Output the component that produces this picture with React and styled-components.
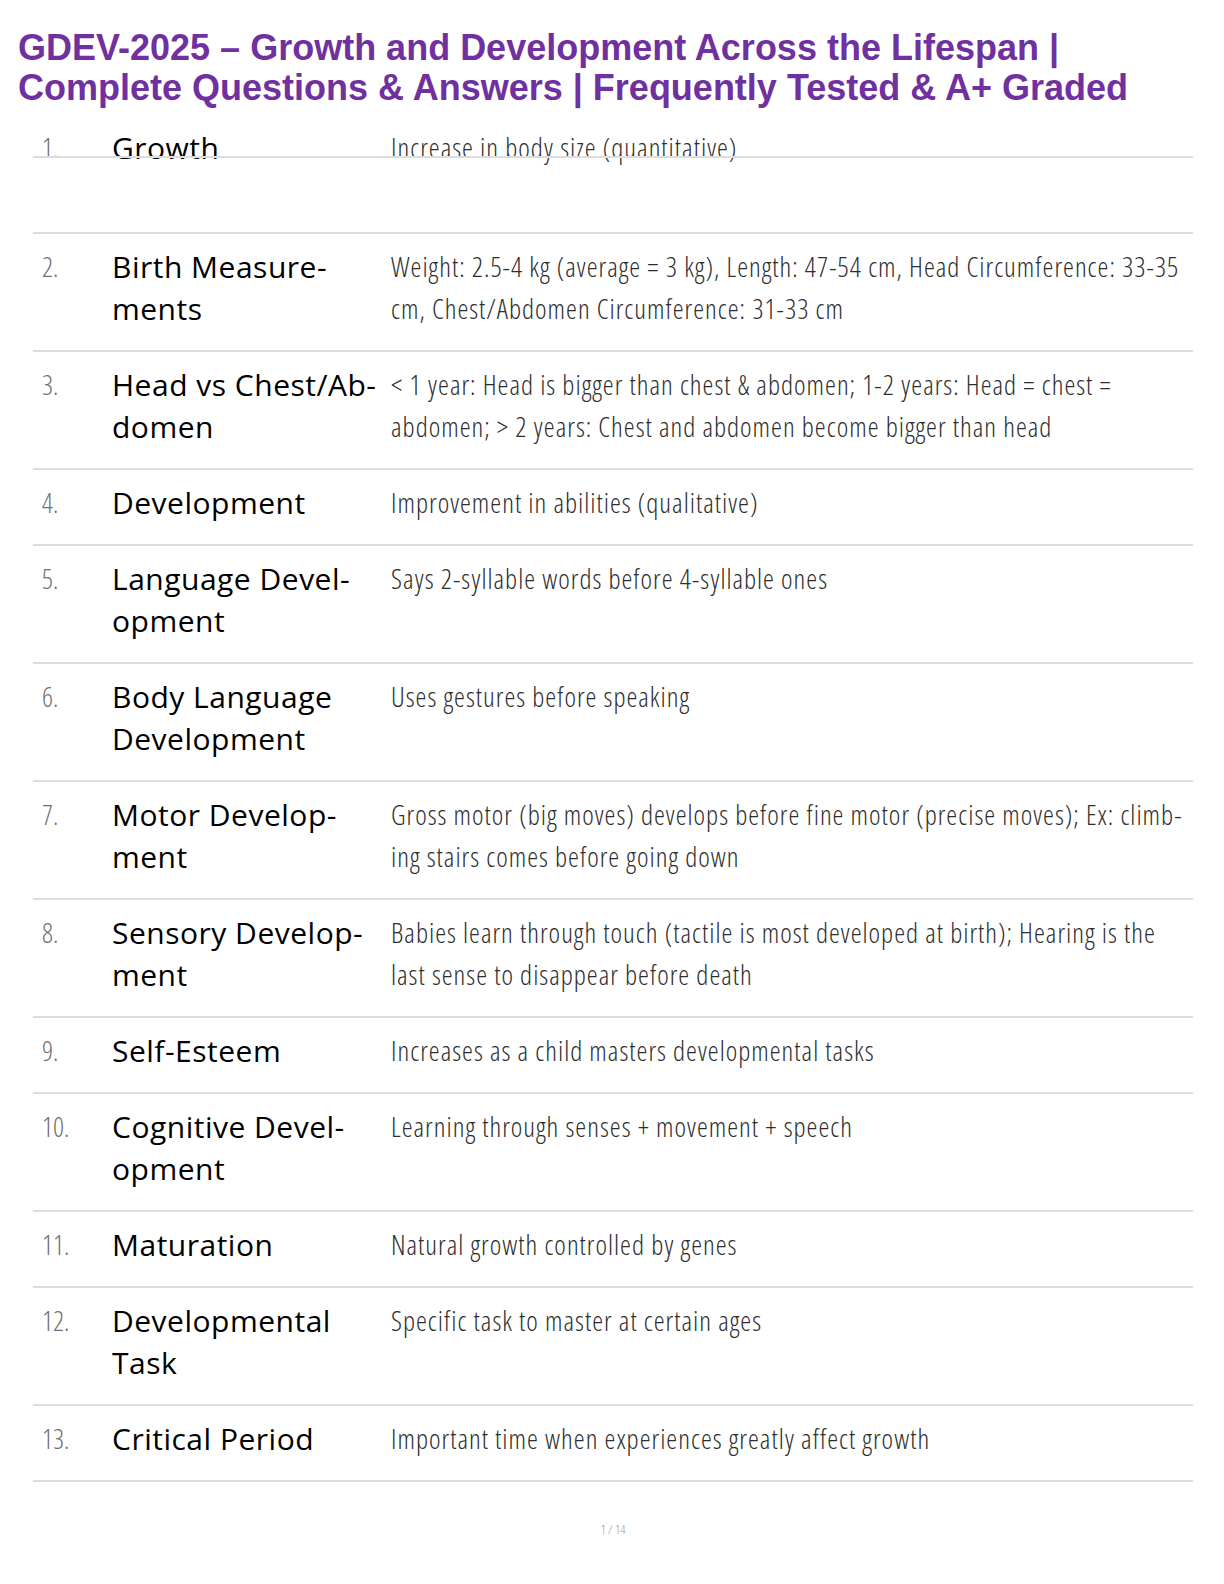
import styled, { createGlobalStyle } from "styled-components";

const GlobalStyle = createGlobalStyle`
  html, body {
    margin: 0;
    padding: 0;
    background: #ffffff;
  }
`;

const Page = styled.div`
  width: 1224px;
  min-height: 1584px;
  box-sizing: border-box;
  padding: 28px 31px 0 33px;
  background: #fff;
`;

const Titulo = styled.h1`
  margin: 0 0 7px -15px;
  font-family: "Liberation Sans", Arial, sans-serif;
  font-weight: bold;
  font-size: 36px;
  line-height: 40px;
  color: #7030a0;
  white-space: nowrap;
`;

const Tabela = styled.div`
  display: flex;
  flex-direction: column;
`;

const Linha = styled.div`
  position: relative;
  display: grid;
  grid-template-columns: 70px 279px 1fr;
  padding: 12px 3px 20px 9px;
  border-bottom: 2px solid #dcdce3;
  min-height: ${(props) => (props.primeira ? "85px" : "0")};

  &::before {
    content: "";
    display: ${(props) => (props.primeira ? "block" : "none")};
    position: absolute;
    left: 0;
    right: 0;
    top: 41px;
    height: 2px;
    background: #dcdce3;
  }
`;

const Numero = styled.div`
  font-family: "Open Sans", sans-serif;
  font-weight: 300;
  font-stretch: 75%;
  font-size: 27px;
  line-height: 42px;
  color: #707070;
`;

const Termo = styled.div`
  font-family: "Open Sans", sans-serif;
  font-weight: 500;
  font-size: 30px;
  letter-spacing: 0.5px;
  line-height: 42px;
  color: #000;
`;

const Resposta = styled.div`
  font-family: "Open Sans", sans-serif;
  font-weight: 300;
  font-stretch: 75%;
  font-size: 27.5px;
  letter-spacing: 1px;
  line-height: 42px;
  color: #2e2e2e;
`;

const Rodape = styled.div`
  margin-top: 38px;
  text-align: center;
  font-family: "Open Sans", sans-serif;
  font-weight: 300;
  font-stretch: 75%;
  font-size: 13px;
  color: #999;
`;

const itens = [
  ["Growth", "Increase in body size (quantitative)"],
  [["Birth Measure-", "ments"], "Weight: 2.5-4 kg (average = 3 kg), Length: 47-54 cm, Head Circumference: 33-35 cm, Chest/Abdomen Circumference: 31-33 cm"],
  [["Head vs Chest/Ab-", "domen"], "< 1 year: Head is bigger than chest & abdomen; 1-2 years: Head = chest = abdomen; > 2 years: Chest and abdomen become bigger than head"],
  ["Development", "Improvement in abilities (qualitative)"],
  [["Language Devel-", "opment"], "Says 2-syllable words before 4-syllable ones"],
  [["Body Language", "Development"], "Uses gestures before speaking"],
  [["Motor Develop-", "ment"], "Gross motor (big moves) develops before fine motor (precise moves); Ex: climb\u00ADing stairs comes before going down"],
  [["Sensory Develop-", "ment"], "Babies learn through touch (tactile is most developed at birth); Hearing is the last sense to disappear before death"],
  ["Self-Esteem", "Increases as a child masters developmental tasks"],
  [["Cognitive Devel-", "opment"], "Learning through senses + movement + speech"],
  ["Maturation", "Natural growth controlled by genes"],
  [["Developmental", "Task"], "Specific task to master at certain ages"],
  ["Critical Period", "Important time when experiences greatly affect growth"],
];

function App() {
  return (
    <Page>
      <GlobalStyle />
      <Titulo>
        GDEV-2025 – Growth and Development Across the Lifespan |<br />
        Complete Questions &amp; Answers | Frequently Tested &amp; A+ Graded
      </Titulo>
      <Tabela>
        {itens.map(([termo, resposta], i) => (
          <Linha key={i} primeira={i === 0}>
            <Numero>{i + 1}.</Numero>
            <Termo>
              {Array.isArray(termo) ? (
                <>
                  {termo[0]}
                  <br />
                  {termo[1]}
                </>
              ) : (
                termo
              )}
            </Termo>
            <Resposta>{resposta}</Resposta>
          </Linha>
        ))}
      </Tabela>
      <Rodape>1 / 14</Rodape>
    </Page>
  );
}

export default App;
